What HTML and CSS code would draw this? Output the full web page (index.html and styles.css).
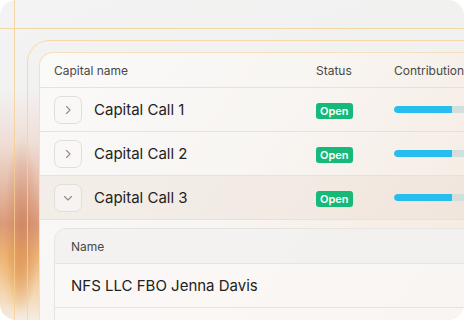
FILE: index.html
```html
<!DOCTYPE html>
<html>
<head>
<meta charset="utf-8">
<link rel="stylesheet" href="styles.css">
</head>
<body>
<div class="card">
  <div class="glow"></div>
  <div class="glow-core"></div>
  <div class="vline"></div>
  <div class="hline"></div>
  <div class="frame">
    <div class="panel">
      <div class="row head">
        <div class="c-name">Capital name</div>
        <div class="c-status">Status</div>
        <div class="c-contrib">Contribution</div>
      </div>
      <div class="row">
        <div class="c-name">
          <span class="toggle"><svg width="10" height="10" viewBox="0 0 10 10"><path d="M3.5 1.5 L7 5 L3.5 8.5" fill="none" stroke="#8f8c8a" stroke-width="1.1" stroke-linecap="round" stroke-linejoin="round"/></svg></span>
          <span class="title">Capital Call 1</span>
        </div>
        <div class="c-status"><span class="badge">Open</span></div>
        <div class="c-contrib"><div class="bar"><div class="fill" style="width:58px"></div></div></div>
      </div>
      <div class="row">
        <div class="c-name">
          <span class="toggle"><svg width="10" height="10" viewBox="0 0 10 10"><path d="M3.5 1.5 L7 5 L3.5 8.5" fill="none" stroke="#8f8c8a" stroke-width="1.1" stroke-linecap="round" stroke-linejoin="round"/></svg></span>
          <span class="title">Capital Call 2</span>
        </div>
        <div class="c-status"><span class="badge">Open</span></div>
        <div class="c-contrib"><div class="bar"><div class="fill" style="width:58px"></div></div></div>
      </div>
      <div class="row open">
        <div class="c-name">
          <span class="toggle"><svg width="10" height="10" viewBox="0 0 10 10"><path d="M1.5 3.5 L5 7 L8.5 3.5" fill="none" stroke="#8f8c8a" stroke-width="1.1" stroke-linecap="round" stroke-linejoin="round"/></svg></span>
          <span class="title">Capital Call 3</span>
        </div>
        <div class="c-status"><span class="badge">Open</span></div>
        <div class="c-contrib"><div class="bar"><div class="fill" style="width:58px"></div></div></div>
      </div>
      <div class="detail">
        <div class="sub">
          <div class="sub-head">Name</div>
          <div class="sub-row">NFS LLC FBO Jenna Davis</div>
          <div class="sub-row"></div>
        </div>
      </div>
    </div>
  </div>
</div>
</body>
</html>
```

FILE: styles.css
```css
* { box-sizing: border-box; }
html, body { margin: 0; padding: 0; background: #ffffff; }
body { width: 464px; height: 320px; overflow: hidden; font-family: Inter, "Noto Sans", sans-serif; }

.card {
  position: relative;
  width: 464px;
  height: 320px;
  border-radius: 16px;
  overflow: hidden;
  background: linear-gradient(160deg, #f3f3f3 0%, #f1f0ef 55%, #f4ede6 100%);
  padding: 40px 0 0 27px;
}

.glow {
  position: absolute;
  left: 0; top: 0;
  width: 42px; height: 320px;
  background: linear-gradient(to bottom,
    rgba(236,205,190,0) 28%,
    rgba(236,205,190,0.55) 45%,
    rgba(226,175,150,0.8) 58%,
    rgba(215,140,100,0.85) 70%,
    rgba(236,170,95,0.85) 80%,
    rgba(244,200,140,0.7) 90%,
    rgba(248,232,215,0.5) 100%);
}
.glow-core {
  position: absolute;
  left: 0; top: 0;
  width: 42px; height: 320px;
  background:
    radial-gradient(ellipse 18px 90px at 22px 225px, rgba(200,120,85,0.55), rgba(200,120,85,0) 100%),
    radial-gradient(ellipse 18px 45px at 18px 270px, rgba(238,160,70,0.5), rgba(238,160,70,0) 100%);
}

.vline {
  position: absolute;
  left: 14px; top: 0;
  width: 1px; height: 320px;
  background: rgba(246, 205, 140, 0.75);
}
.hline {
  position: absolute;
  left: 0; top: 28px;
  width: 464px; height: 1px;
  background: rgba(246, 205, 140, 0.75);
}

.frame {
  position: relative;
  width: 520px;
  height: 320px;
  border: 1px solid rgba(247, 210, 150, 0.8);
  border-radius: 22px 0 0 0;
  padding: 11px 0 0 11px;
}

.panel {
  width: 520px;
  height: 300px;
  border: 1px solid rgba(247, 222, 185, 0.9);
  border-radius: 14px 0 0 0;
  background: linear-gradient(125deg, #fafaf9 0%, #f8f5f2 40%, #f6ece3 75%, #f4e6d8 100%);
  overflow: hidden;
}

.row {
  display: flex;
  align-items: center;
  height: 44px;
  border-bottom: 1px solid #e6e1dd;
  padding-left: 14px;
}
.row.head {
  height: 35px;
  font-size: 12px;
  color: #4a4846;
  padding-top: 1px;
}
.row.open {
  background: rgba(232, 218, 206, 0.35);
}

.c-name { width: 262px; display: flex; align-items: center; }
.c-status { width: 78px; }
.c-contrib { flex: 1; }

.toggle {
  width: 28px; height: 28px;
  border: 1px solid #e1dddb;
  border-radius: 7px;
  background: rgba(250, 247, 245, 0.6);
  display: inline-flex;
  align-items: center;
  justify-content: center;
  margin-right: 12px;
}
.title { font-size: 15px; color: #222222; }

.badge {
  display: inline-block;
  background: #16b977;
  color: #ffffff;
  font-size: 11px;
  font-weight: 600;
  line-height: 16px;
  height: 16px;
  padding: 0 4px;
  border-radius: 3px;
  position: relative;
  top: -1px;
}

.bar {
  width: 80px;
  height: 7px;
  border-radius: 4px 0 0 4px;
  background: #d3dedf;
  overflow: hidden;
}
.fill { height: 7px; background: #27bdec; border-radius: 4px 0 0 4px; }

.detail {
  padding: 8px 0 0 14px;
}
.sub {
  width: 480px;
  border: 1px solid #e6e3e0;
  border-radius: 12px 0 0 0;
  overflow: hidden;
  background: rgba(250, 248, 246, 0.8);
}
.sub-head {
  height: 35px;
  display: flex;
  align-items: center;
  padding-left: 16px;
  font-size: 12px;
  color: #4a4846;
  background: rgba(242, 241, 240, 0.9);
  border-bottom: 1px solid #e6e3e0;
}
.sub-row {
  height: 44px;
  display: flex;
  align-items: center;
  padding-left: 16px;
  font-size: 15px;
  color: #222222;
  border-bottom: 1px solid #e6e3e0;
}
```
